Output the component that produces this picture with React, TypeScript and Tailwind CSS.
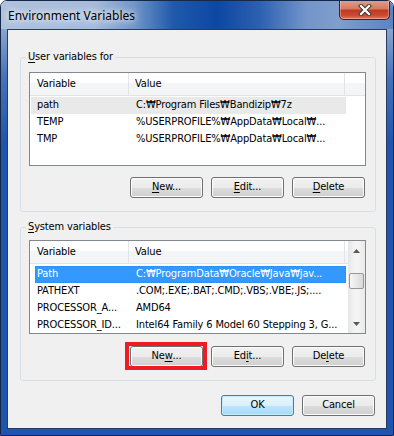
import type { ReactNode } from 'react';

type Variable = { name: string; value: string };

const userVars: Variable[] = [
  { name: 'path', value: 'C:₩Program Files₩Bandizip₩7z' },
  { name: 'TEMP', value: '%USERPROFILE%₩AppData₩Local₩...' },
  { name: 'TMP', value: '%USERPROFILE%₩AppData₩Local₩...' },
];

const systemVars: Variable[] = [
  { name: 'Path', value: 'C:₩ProgramData₩Oracle₩Java₩jav...' },
  { name: 'PATHEXT', value: '.COM;.EXE;.BAT;.CMD;.VBS;.VBE;.JS;....' },
  { name: 'PROCESSOR_A...', value: 'AMD64' },
  { name: 'PROCESSOR_ID...', value: 'Intel64 Family 6 Model 60 Stepping 3, G...' },
];

const uiFont = "font-['DejaVu_Sans_Condensed','DejaVu_Sans',sans-serif] text-[11px] tracking-[-0.15px] text-black";

const Button = ({ children, primary = false }: { children: ReactNode; primary?: boolean }) => (
  <button
    className={
      primary
        ? 'flex h-[21px] w-[73px] items-center justify-center rounded-[3px] border border-[#3c7fb1] bg-[linear-gradient(to_bottom,#eaf6fd_0%,#d9f0fc_50%,#bee6fd_50%,#a7d9f5_100%)] shadow-[inset_0_0_0_1px_#c5ecfc]'
        : 'flex h-[21px] w-[73px] items-center justify-center rounded-[3px] border border-[#707070] bg-[linear-gradient(to_bottom,#f2f2f2_0%,#ebebeb_50%,#dddddd_50%,#cfcfcf_100%)] shadow-[inset_0_0_0_1px_#fcfcfc]'
    }
  >
    {children}
  </button>
);

const Key = ({ children }: { children: ReactNode }) => <span className="underline underline-offset-[2px]">{children}</span>;

const Header = () => (
  <div className="flex h-[23px] shrink-0 border-b border-[#e2e3e6] bg-[linear-gradient(to_bottom,#ffffff_0%,#ffffff_45%,#f4f5f7_45%,#f4f5f7_100%)]">
    <div className="flex w-[99px] items-center border-r border-[#e3e4e7] pl-[7px]">Variable</div>
    <div className="flex w-[216px] items-center border-r border-[#e3e4e7] pl-[6px]">Value</div>
    <div className="flex-1" />
  </div>
);

const Row = ({ item, mode }: { item: Variable; mode: 'normal' | 'hover' | 'selected' }) => {
  if (mode === 'selected') {
    return (
      <div className="ml-[5px] flex h-[17px] w-[311px] items-center border border-dotted border-[#cc6600] bg-[#3399ff] text-white">
        <div className="w-[94px] overflow-hidden whitespace-nowrap pl-[1px]">{item.name}</div>
        <div className="flex-1 overflow-hidden whitespace-nowrap pl-[6px]">{item.value}</div>
      </div>
    );
  }
  return (
    <div className={mode === 'hover' ? 'ml-[1px] flex h-[17px] w-[315px] items-center bg-[#e9e9e9]' : 'ml-[1px] flex h-[17px] w-[315px] items-center'}>
      <div className="w-[98px] overflow-hidden whitespace-nowrap pl-[6px]">{item.name}</div>
      <div className="flex-1 overflow-hidden whitespace-nowrap pl-[7px]">{item.value}</div>
    </div>
  );
};

const Arrow = ({ up }: { up: boolean }) => (
  <svg width="7" height="4" viewBox="0 0 7 4">
    <path d={up ? 'M0 4 L3.5 0 L7 4 Z' : 'M0 0 L3.5 4 L7 0 Z'} fill="#5a5a5a" />
  </svg>
);

const ScrollBar = () => (
  <div className="flex w-[17px] shrink-0 flex-col items-center bg-[linear-gradient(to_right,#e6e6e6,#f4f4f4_40%,#f4f4f4_60%,#e9e9e9)]">
    <div className="flex h-[17px] w-full items-center justify-center pt-[2px]">
      <Arrow up />
    </div>
    <div className="h-[15px]" />
    <div className="h-[16px] w-[15px] rounded-[2px] border border-[#979797] bg-[linear-gradient(to_right,#f6f6f6,#e8e8e8_50%,#d9d9d9)]" />
    <div className="flex-1" />
    <div className="flex h-[17px] w-full items-center justify-center pb-[2px]">
      <Arrow up={false} />
    </div>
  </div>
);

const VariableGroup = ({
  title,
  items,
  system,
}: {
  title: ReactNode;
  items: Variable[];
  system: boolean;
}) => (
  <fieldset
    className={
      system
        ? 'ml-[12px] mt-[8px] w-[356px] rounded-[3px] border border-[#d5dfe5] pb-[13px] pl-[8px] pr-[9px]'
        : 'ml-[12px] mt-[20px] w-[356px] rounded-[3px] border border-[#d5dfe5] pb-[13px] pl-[8px] pr-[9px]'
    }
  >
    <legend className="-ml-[3px] px-[2px] leading-[14px]">{title}</legend>
    <div className={system ? 'mt-[6px] flex h-[94px] border border-[#828790] bg-white' : 'mt-[8px] flex h-[94px] border border-[#828790] bg-white'}>
      {system ? (
        <>
          <div className="flex flex-1 flex-col">
            <Header />
            <div className="pt-[2px]">
              {items.map((item, i) => (
                <Row key={item.name} item={item} mode={i === 0 ? 'selected' : 'normal'} />
              ))}
            </div>
          </div>
          <ScrollBar />
        </>
      ) : (
        <div className="flex flex-1 flex-col">
          <Header />
          <div className="pt-[1px]">
            {items.map((item, i) => (
              <Row key={item.name} item={item} mode={i === 0 ? 'hover' : 'normal'} />
            ))}
          </div>
        </div>
      )}
    </div>
    <div className={system ? 'mt-[12px] flex justify-end gap-[8px] pr-[1px]' : 'mt-[11px] flex justify-end gap-[8px] pr-[1px]'}>
      {system ? (
        <div className="relative">
          <Button>
            Ne<Key>w</Key>...
          </Button>
          <div className="pointer-events-none absolute -bottom-[3px] -left-[5px] -right-[4px] -top-[4px] border-[4px] border-[#ed1c24]" />
        </div>
      ) : (
        <Button>
          <Key>N</Key>ew...
        </Button>
      )}
      <Button>{system ? <>Ed<Key>i</Key>t...</> : <><Key>E</Key>dit...</>}</Button>
      <Button>{system ? <>De<Key>l</Key>ete</> : <><Key>D</Key>elete</>}</Button>
    </div>
  </fieldset>
);

const CloseButton = () => (
  <div className="absolute right-[3px] top-[-1px] flex h-[20px] w-[51px] items-center justify-center rounded-b-[5px] border border-t-0 border-[#4b1e16] bg-[linear-gradient(to_bottom,#e3a08f_0%,#d47b66_45%,#c2391f_55%,#c84a31_80%,#dd7a5f_100%)] shadow-[inset_0_0_0_1px_rgba(255,220,210,0.4)]">
    <svg width="14" height="12" viewBox="0 0 14 12">
      <path d="M3 2 L11 10 M11 2 L3 10" stroke="#3d3d3d" strokeWidth="4.2" strokeLinecap="square" />
      <path d="M3 2 L11 10 M11 2 L3 10" stroke="#ffffff" strokeWidth="2.2" strokeLinecap="square" />
    </svg>
  </div>
);

const App = () => (
  <div className="h-[436px] w-[394px] bg-white">
    <div className="flex h-[436px] w-[394px] flex-col overflow-hidden rounded-t-[7px] border border-[#16284a]">
      <div className="relative flex h-[28px] shrink-0 items-center bg-[linear-gradient(to_right,#aec2dd_0%,#a6bbd9_24%,#7196c9_34%,#2059ab_44%,#0c47a3_55%,#2d60b0_66%,#7495ca_78%,#7f9ecd_86%,#5a84c2_100%)] pl-[7px] pt-[1px]">
        <span className="font-['Noto_Sans',sans-serif] text-[12px] text-black [text-shadow:0_0_6px_#ffffff,0_0_10px_#ffffff]">
          Environment Variables
        </span>
        <CloseButton />
      </div>
      <div className="flex flex-1 flex-col bg-[linear-gradient(to_bottom,#8aa5cd_0%,#4572b9_12%,#1f55ac_28%,#1f55ac_100%)] px-[6px] pb-[6px]">
        <div className={`flex flex-1 flex-col border border-[#2a3c5e] bg-[#f0f0f0] ${uiFont}`}>
          <VariableGroup
            title={
              <>
                <Key>U</Key>ser variables for
              </>
            }
            items={userVars}
            system={false}
          />
          <VariableGroup
            title={
              <>
                <Key>S</Key>ystem variables
              </>
            }
            items={systemVars}
            system
          />
          <div className="mt-[14px] flex justify-end gap-[8px] pr-[11px]">
            <Button primary>OK</Button>
            <Button>Cancel</Button>
          </div>
        </div>
      </div>
    </div>
  </div>
);

export default App;
